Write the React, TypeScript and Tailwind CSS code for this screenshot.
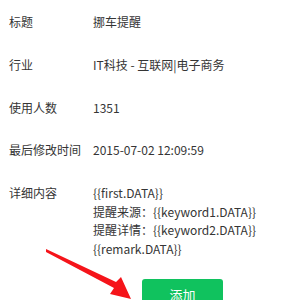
import React from "react";

const rows: [string, string[]][] = [
  ["标题", ["挪车提醒"]],
  ["行业", ["IT科技 - 互联网|电子商务"]],
  ["使用人数", ["1351"]],
  ["最后修改时间", ["2015-07-02 12:09:59"]],
  [
    "详细内容",
    [
      "{{first.DATA}}",
      "提醒来源：{{keyword1.DATA}}",
      "提醒详情：{{keyword2.DATA}}",
      "{{remark.DATA}}",
    ],
  ],
];

export default function App() {
  return (
    <div
      className="relative w-[300px] h-[300px] overflow-hidden bg-white text-[12px] text-[#353535]"
      style={{ fontFamily: '"Noto Sans CJK SC", "Noto Sans", sans-serif' }}
    >
      <div className="flex flex-col gap-[24.3px] pt-[13px] pl-[9px]">
        {rows.map(([label, values]) => (
          <div key={label} className="flex leading-[18.5px]">
            <div className="w-[84px] shrink-0">{label}</div>
            <div className="flex flex-col">
              {values.map((v) => (
                <div key={v} className="whitespace-nowrap">
                  {v}
                </div>
              ))}
            </div>
          </div>
        ))}
      </div>
      <div className="pl-[142px] pt-[21px]">
        <button className="w-[81px] h-[32px] rounded-[3px] bg-[#10c25e] text-white text-[13px] leading-[32px] text-center">
          添加
        </button>
      </div>
      <svg
        className="absolute left-0 top-0"
        width="300"
        height="300"
        viewBox="0 0 300 300"
      >
        <polygon
          points="46,249 116,282 121,277 131,299 110,294 114,288 46,252"
          fill="#f5141a"
        />
      </svg>
    </div>
  );
}
